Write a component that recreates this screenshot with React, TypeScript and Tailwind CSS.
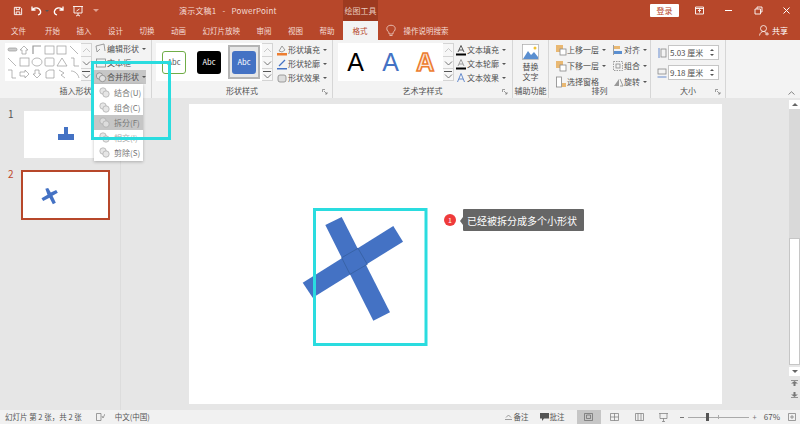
import type { ReactNode } from 'react';

const TABS_LEFT = ['开始', '插入', '设计', '切换', '动画', '幻灯片放映', '审阅', '视图', '帮助'];

function Caret() {
  return <span className="ml-[3px] inline-block h-0 w-0 border-x-[2px] border-t-[2px] border-x-transparent border-t-[#555]" />;
}

function Ico({ children, w = 12 }: { children: ReactNode; w?: number }) {
  return (
    <svg width={w} height="12" viewBox={`0 0 ${w} 12`} fill="none" stroke="#888" strokeWidth="0.8" className="shrink-0">
      {children}
    </svg>
  );
}

function Cmd({ icon, label, caret = true, className = '' }: { icon: ReactNode; label: string; caret?: boolean; className?: string }) {
  return (
    <div className={`flex h-[14px] items-center whitespace-nowrap ${className}`}>
      {icon}
      <span>{label}</span>
      {caret && <Caret />}
    </div>
  );
}

function Chevron({ up = false, light = false }: { up?: boolean; light?: boolean }) {
  return (
    <svg width="9" height="6" viewBox="0 0 9 6" fill="none" stroke={light ? '#bbb' : '#555'} strokeWidth="0.8">
      <path d={up ? 'M1 5 L4.5 1.5 L8 5' : 'M1 1.5 L4.5 5 L8 1.5'} />
    </svg>
  );
}

function Spin() {
  return (
    <div className="flex h-[38px] w-[11px] flex-col border-y border-r border-[#d4d4d4] bg-[#f7f7f7]">
      <div className="flex h-[13px] items-center justify-center border-b border-[#d4d4d4]"><Chevron up light /></div>
      <div className="flex h-[12px] items-center justify-center border-b border-[#d4d4d4]"><Chevron /></div>
      <div className="flex flex-1 flex-col items-center justify-center gap-[1px]">
        <div className="h-px w-[8px] bg-[#555]" />
        <Chevron />
      </div>
    </div>
  );
}

function Launcher() {
  return (
    <svg width="6" height="6" viewBox="0 0 6 6" fill="none" stroke="#777" strokeWidth="0.7">
      <path d="M0.5 3 V0.5 H3 M2 2 L5 5 M5 3 V5 H3" />
    </svg>
  );
}

function Group({ w, label, launcher = false, children }: { w: string; label: string; launcher?: boolean; children: ReactNode }) {
  return (
    <div className={`flex h-full shrink-0 flex-col border-r border-[#d6d6d6] ${w}`}>
      <div className="flex h-[45px] items-start pt-[3px]">{children}</div>
      <div className="relative flex h-[12px] items-center justify-center text-[8px] text-[#505050]">
        <span>{label}</span>
        {launcher && (
          <span className="absolute right-[4px] top-[4px] flex">
            <Launcher />
          </span>
        )}
      </div>
    </div>
  );
}

function ShapeGallery() {
  return (
    <svg width="76" height="38" viewBox="0 0 76 38" className="bg-white" fill="none" stroke="#999" strokeWidth="0.7">
      <rect x="3" y="5" width="9" height="3" rx="1.5" fill="#ccc" />
      <path d="M19 3 L23 7 H21 V11 H17 V7 H15 Z" />
      <path d="M28 11 V3 H36" strokeWidth="1.2" />
      <rect x="40" y="3" width="9" height="8" />
      <rect x="52" y="3" width="9" height="8" />
      <path d="M65 3 L73 11" />
      <path d="M3 15 L11 23" />
      <rect x="15" y="15" width="9" height="8" />
      <ellipse cx="32" cy="19" rx="5" ry="4" />
      <rect x="40" y="15" width="9" height="8" rx="1" />
      <path d="M57 15 L62 23 H52 Z" />
      <path d="M66 15 H69 V23 H74" />
      <path d="M3 27 H7 V35 H11" />
      <path d="M15 29 H20 V27 L24 31 L20 35 V33 H15 Z" />
      <path d="M30 27 H34 V31 H36 L32 35 L28 31 H30 Z" />
      <path d="M41 35 V29 L44 27 H49 V35 Z" />
      <path d="M54 27 L59 30 L56 32 L60 35" />
      <path d="M66 28 C70 28 73 31 74 35" />
    </svg>
  );
}

function StyleBox({ className, label }: { className: string; label: string }) {
  return <div className={`flex h-[23px] w-[24px] items-center justify-center rounded-[3px] text-[7.5px] ${className}`}>{label}</div>;
}

function NumberBox({ value, icon }: { value: string; icon: ReactNode }) {
  return (
    <div className="flex h-[15px] items-center gap-[1px]">
      {icon}
      <div className="flex h-[15px] w-[51px] items-center justify-between border border-[#c6c6c6] bg-white px-[1px] text-[8px]">
        <span>{value}</span>
        <span className="flex flex-col items-center gap-[3px] pr-[3px]">
          <span className="h-0 w-0 border-x-[2px] border-b-[2px] border-x-transparent border-b-[#555]" />
          <span className="h-0 w-0 border-x-[2px] border-t-[2px] border-x-transparent border-t-[#555]" />
        </span>
      </div>
    </div>
  );
}

function MenuRow({ label, active = false, muted = false }: { label: string; active?: boolean; muted?: boolean }) {
  return (
    <div className={`flex h-[15px] items-center pl-[5px] ${active ? 'bg-[#c6c6c6]' : ''} ${muted ? 'text-[#aaa]' : 'text-[#777]'}`}>
      <svg width="11" height="11" viewBox="0 0 11 11" fill={active ? '#ddd' : '#e6e6e6'} stroke="#aaa" strokeWidth="0.7" className="shrink-0">
        <circle cx="4" cy="4" r="3.2" />
        <circle cx="7" cy="7" r="3.2" />
      </svg>
      <span className="ml-[4px]">{label}</span>
    </div>
  );
}

function TitleBar() {
  return (
    <div className="relative flex h-[21px] items-center bg-[#b7472a] text-white">
      <div className="flex w-[99px] items-center pl-[13px]">
        <svg width="10" height="10" viewBox="0 0 11 11" fill="none" stroke="#fff" strokeWidth="1">
          <path d="M1.5 1.5 H8 L9.5 3 V9.5 H1.5 Z M3.5 1.5 V4 H7 V1.5 M3.5 9.5 V6.5 H7.5 V9.5" />
        </svg>
        <svg width="11" height="11" viewBox="0 0 11 11" fill="none" stroke="#fff" strokeWidth="1.3" className="ml-[8px]">
          <path d="M1 1.5 V5 H4.5 M1.3 5 C3 2 8 2 9.5 6 C10 8 8.5 9.5 7 10" />
        </svg>
        <Caret />
        <svg width="11" height="11" viewBox="0 0 11 11" fill="none" stroke="#fff" strokeWidth="1.3" className="ml-[4px]">
          <path d="M10 1.5 V5 H6.5 M9.7 5 C8 2 3 2 1.5 6 C1 8 2.5 9.5 4 10" />
        </svg>
        <svg width="12" height="12" viewBox="0 0 12 12" fill="none" stroke="#fff" strokeWidth="0.9" className="ml-[8px]">
          <path d="M1 1.5 H11 M2 1.5 V8 H10 V1.5 M6 8 V10 M4 11 L6 10 L8 11 M4.5 6 L7.5 4" />
        </svg>
        <span className="ml-[9px] inline-block h-0 w-0 border-x-[3px] border-t-[3px] border-x-transparent border-t-[#e0a090]" />
      </div>
      <div className="ml-[80px] flex w-[96px] gap-[6px] whitespace-nowrap text-[8px] tracking-[0.2px] text-[#f4dcd5]">
        <span>演示文稿1</span>
        <span>-</span>
        <span>PowerPoint</span>
      </div>
      <div className="ml-[68px] flex h-full w-[35px] items-center justify-center bg-[#9d3a20] text-[8px] text-[#e8c9bf]">绘图工具</div>
      <div className="ml-auto flex items-center pr-[9px]">
        <div className="flex h-[13px] w-[29px] items-center justify-center rounded-[1px] bg-white text-[8px] text-[#b7472a]">登录</div>
        <svg width="9" height="9" viewBox="0 0 9 9" fill="none" stroke="#fff" strokeWidth="0.9" className="ml-[16px]"><path d="M0.5 1 H8.5 V8 H0.5 Z M0.5 2.5 H8.5 M4.5 3.5 V6.5 M3 5 L4.5 3.5 L6 5" /></svg>
        <div className="ml-[21px] h-px w-[7px] bg-white" />
        <svg width="9" height="9" viewBox="0 0 9 9" fill="none" stroke="#fff" strokeWidth="0.9" className="ml-[22px]"><path d="M1 3 H6.5 V8 H1 Z M3 3 V1 H8 V6 H6.5" /></svg>
        <svg width="9" height="9" viewBox="0 0 9 9" fill="none" stroke="#fff" strokeWidth="1" className="ml-[19px]"><path d="M1.5 1.5 L7.5 7.5 M7.5 1.5 L1.5 7.5" /></svg>
      </div>
    </div>
  );
}

function TabBar() {
  return (
    <div className="flex h-[19px] items-center bg-[#b7472a] text-[7.5px] text-[#f4dcd5]">
      <span className="ml-[11px]">文件</span>
      <div className="ml-[19px] flex gap-[16.5px]">
        {TABS_LEFT.map(t => <span key={t}>{t}</span>)}
      </div>
      <div className="ml-[8px] flex h-full w-[35px] items-center justify-center bg-[#f3f3f3] text-[#b7472a]">格式</div>
      <svg width="10" height="13" viewBox="0 0 10 13" fill="none" stroke="#f0d4cb" strokeWidth="0.8" className="ml-[8px]">
        <path d="M3 8.5 C1 7 0.5 5 1 3.5 C2 0.5 8 0.5 9 3.5 C9.5 5 9 7 7 8.5 V10 H3 Z M3.5 11.5 H6.5" />
      </svg>
      <span className="ml-[8px]">操作说明搜索</span>
      <div className="ml-auto flex items-center gap-[3px] pr-[12px] text-[8px] text-white">
        <svg width="10" height="11" viewBox="0 0 10 11" fill="none" stroke="#fff" strokeWidth="0.8">
          <circle cx="4.5" cy="3.5" r="3" />
          <path d="M0.5 10.5 C1 7.5 3 6.5 4.5 6.5 C5.5 6.5 6.5 7 7 7.5 M6 9 H10 M8 7 V10.5" />
        </svg>
        <span>共享</span>
      </div>
    </div>
  );
}

function Ribbon() {
  return (
    <div className="relative flex h-[58px] bg-[#f3f3f3] text-[8px] text-[#505050]">
      <Group w="w-[152px]" label="插入形状">
        <div className="ml-[5px]"><ShapeGallery /></div>
        <Spin />
        <div className="ml-[2px] -mt-[1px] flex flex-col">
          <Cmd icon={<Ico><path d="M2 9 L1 3 L9 1 L10 8 M2 9 L5 6" /></Ico>} label="编辑形状" className="pl-[1px]" />
          <Cmd icon={<Ico><rect x="1.5" y="2" width="9" height="8" /></Ico>} label="文本框" caret={false} className="pl-[1px]" />
          <Cmd
            icon={<Ico><circle cx="4.5" cy="5" r="3.2" fill="#e0e0e0" /><circle cx="7.5" cy="7.5" r="3.2" fill="#e0e0e0" /></Ico>}
            label="合并形状"
            className="w-[52px] bg-[#c6c6c6] pl-[1px]"
          />
        </div>
      </Group>

      <Group w="w-[181px]" label="形状样式" launcher>
        <div className="ml-[4px] flex h-[38px] w-[106px] items-center bg-white">
          <StyleBox className="ml-[6px] border border-[#70ad47] bg-white text-[#555]" label="Abc" />
          <StyleBox className="ml-[11px] bg-black text-white" label="Abc" />
          <div className="ml-[7px] flex h-[34px] w-[32px] items-center justify-center border-2 border-[#b5b5b5] bg-[#e8e8e8]">
            <StyleBox className="bg-[#4472c4] text-white" label="Abc" />
          </div>
        </div>
        <Spin />
        <div className="ml-[3px] flex flex-col">
          <Cmd icon={<Ico><path d="M3 7 L6 2 L9 6 L6 8 Z" /><rect x="1" y="9" width="10" height="2.5" fill="#ed7d31" stroke="none" /></Ico>} label="形状填充" />
          <Cmd icon={<Ico><path d="M3 8 L9 2" stroke="#4472c4" strokeWidth="1.3" /><rect x="1" y="10" width="10" height="1.5" fill="#4472c4" stroke="none" /></Ico>} label="形状轮廓" />
          <Cmd icon={<Ico><rect x="2" y="3" width="8" height="7" rx="2" fill="#ddd" /></Ico>} label="形状效果" />
        </div>
      </Group>

      <Group w="w-[180px]" label="艺术字样式" launcher>
        <div className="ml-[5px] flex h-[38px] w-[105px] items-center bg-white font-['Liberation_Sans',sans-serif] text-[25px] leading-none">
          <span className="w-[36px] text-center text-black">A</span>
          <span className="w-[35px] text-center text-[#4472c4]">A</span>
          <span className="w-[36px] text-center font-bold text-[#fbe9dd] [-webkit-text-stroke:1.6px_#ed7d31]">A</span>
        </div>
        <Spin />
        <div className="ml-[1px] flex flex-col">
          <Cmd icon={<Ico><path d="M3 8 L6 1.5 L9 8 M4 6 H8" stroke="#333" /><rect x="1" y="9.5" width="10" height="2" fill="#000" stroke="none" /></Ico>} label="文本填充" />
          <Cmd icon={<Ico><path d="M3 8 L6 1.5 L9 8 M4 6 H8" /><rect x="1" y="9.5" width="10" height="2" fill="#000" stroke="none" /></Ico>} label="文本轮廓" />
          <Cmd icon={<Ico><path d="M2.5 10 L6 1.5 L9.5 10 M4 7 H8" stroke="#4472c4" /></Ico>} label="文本效果" />
        </div>
      </Group>

      <Group w="w-[36px]" label="辅助功能">
        <div className="flex w-full flex-col items-center pt-[1px] leading-[10px]">
          <svg width="18" height="17" viewBox="0 0 18 17" className="mb-[1px]">
            <rect x="0.5" y="0.5" width="16" height="15" fill="#fff" stroke="#aaa" strokeWidth="0.7" />
            <path d="M1 15 L6 7 L9 11 L12 8 L16 13 V15 Z" fill="#5b8fd0" />
            <circle cx="13" cy="4" r="1.5" fill="#f2c230" />
          </svg>
          <span>替换</span>
          <span>文字</span>
        </div>
      </Group>

      <Group w="w-[102px]" label="排列">
        <div className="ml-[6px] flex flex-col gap-px">
          <Cmd icon={<Ico><rect x="1" y="1" width="7" height="7" fill="#e9b872" stroke="none" /><rect x="5" y="5" width="6" height="6" fill="#fff" /></Ico>} label="上移一层" className="mb-[1px]" />
          <Cmd icon={<Ico><rect x="1" y="1" width="7" height="7" fill="#e9b872" stroke="none" /><rect x="5" y="5" width="6" height="6" fill="#fff" /></Ico>} label="下移一层" className="mb-[1px]" />
          <Cmd icon={<Ico><rect x="1.5" y="1" width="5" height="10" fill="#fff" /><rect x="7" y="7" width="4" height="4" fill="#e9b872" stroke="none" /></Ico>} label="选择窗格" caret={false} />
        </div>
        <div className="ml-[6px] flex flex-col gap-px">
          <Cmd icon={<Ico><path d="M1.5 1 V11" /><rect x="2" y="2" width="6" height="3" fill="#e9b872" stroke="none" /><rect x="2" y="7" width="8" height="3" fill="#5b8fd0" stroke="none" /></Ico>} label="对齐" className="mb-[1px]" />
          <Cmd icon={<Ico><rect x="1.5" y="1.5" width="9" height="9" strokeDasharray="1.5 1" /><rect x="4" y="4" width="4" height="4" /></Ico>} label="组合" className="mb-[1px]" />
          <Cmd icon={<Ico><path d="M2 10 L7 3 V10 Z" fill="#999" stroke="none" /><path d="M8 3 L11 10 H8" /></Ico>} label="旋转" />
        </div>
      </Group>

      <Group w="w-[75px]" label="大小" launcher>
        <div className="ml-[6px] mt-[2px] flex flex-col gap-[5px]">
          <NumberBox value="5.03 厘米" icon={<Ico w={10}><path d="M2 1 V11" stroke="#4472c4" /><rect x="4" y="2" width="5" height="8" /></Ico>} />
          <NumberBox value="9.18 厘米" icon={<Ico w={10}><path d="M0.5 10 H9.5" stroke="#4472c4" /><rect x="1" y="2" width="8" height="5" /></Ico>} />
        </div>
      </Group>

      <svg width="7" height="4" viewBox="0 0 7 4" fill="none" stroke="#666" strokeWidth="0.8" className="absolute bottom-[3px] right-[5px]">
        <path d="M0.5 3.5 L3.5 0.8 L6.5 3.5" />
      </svg>
    </div>
  );
}

function Thumbs() {
  return (
    <div className="w-[121px] shrink-0 border-r border-[#dcdcdc] text-[10px]">
      <div className="flex pt-[13px]">
        <span className="-mt-[4px] w-[24px] pl-[8px] leading-[14px] text-[#555]">1</span>
        <div className="flex h-[47px] w-[84px] items-start justify-center bg-white pt-[16px]">
          <svg width="16" height="14" viewBox="0 0 16 14" fill="#4472c4">
            <path d="M6 0 H10 V7 H16 V13 H0 V7 H6 Z" />
          </svg>
        </div>
      </div>
      <div className="mt-[12px] flex">
        <span className="-mt-[3px] w-[21px] pl-[8px] leading-[14px] text-[#c0492c]">2</span>
        <div className="h-[50px] w-[89px] border-2 border-[#b7472a] bg-white pl-[18px] pt-[16px]">
          <svg width="17" height="17" viewBox="0 0 100 102" fill="#4472c4">
            <path d="M25 5 L42 0 L58 27 L90 12 L100 28 L68 46 L88 88 L70 98 L50 58 L12 78 L2 62 L38 40 Z" />
          </svg>
        </div>
      </div>
    </div>
  );
}

function Slide() {
  return (
    <div className="relative h-[300px] w-[533px] bg-white">
      <svg width="533" height="300" viewBox="189 104 533 300" className="absolute inset-0">
        <path d="M302.7 282.7 L393.3 226 L403 241.7 L312.7 297.7 Z" fill="#4472c4" />
        <path d="M325.3 225 L341.7 217 L390 312.3 L373.3 320.7 Z" fill="#4472c4" />
        <path d="M341.7 257.7 L358 248.3 L367.3 264.3 L350 274.3 Z" fill="#4472c4" stroke="#365f9f" strokeWidth="0.8" />
        <rect x="314.5" y="209.5" width="111.5" height="135" fill="none" stroke="#2adcdf" strokeWidth="3" />
      </svg>
      <div className="absolute left-[255px] top-[110px] flex h-[12px] w-[12px] items-center justify-center rounded-full bg-[#ef3b3b] text-[7px] text-white">1</div>
      <div className="absolute left-[271px] top-[113px] h-0 w-0 border-y-[4px] border-r-[3px] border-y-transparent border-r-[#666]" />
      <div className="absolute left-[274px] top-[105px] flex h-[22px] w-[121px] items-center rounded-[1px] bg-[#666] pl-[4px] text-[10px] text-white">已经被拆分成多个小形状</div>
    </div>
  );
}

function ScrollBar() {
  return (
    <div className="flex w-[11px] shrink-0 flex-col items-center pt-[2px]">
      <div className="flex h-[9px] w-full items-center justify-center bg-white">
        <span className="h-0 w-0 border-x-[3px] border-b-[3px] border-x-transparent border-b-[#666]" />
      </div>
      <div className="h-[129px] w-full bg-[#d9d9d9]" />
      <div className="h-[127px] w-full border border-[#c6c6c6] bg-white" />
      <div className="mt-[2px] flex h-[9px] w-full items-center justify-center bg-white">
        <span className="h-0 w-0 border-x-[3px] border-t-[3px] border-x-transparent border-t-[#666]" />
      </div>
      <div className="mt-[3px] flex flex-col items-center gap-[6px]">
        <svg width="7" height="7" viewBox="0 0 7 7" fill="#777"><path d="M0 1 H7 V1.8 H0 Z M3.5 2 L7 4.5 H0 Z M2.5 4.5 H4.5 V7 H2.5 Z" /></svg>
        <svg width="7" height="7" viewBox="0 0 7 7" fill="#777"><path d="M0 6 H7 V5.2 H0 Z M3.5 5 L7 2.5 H0 Z M2.5 2.5 H4.5 V0 H2.5 Z" /></svg>
      </div>
    </div>
  );
}

function StatusBar() {
  return (
    <div className="flex h-[14px] items-center bg-[#f1f1f1] text-[7.5px] text-[#555]">
      <span className="ml-[5px]">幻灯片 第 2 张，共 2 张</span>
      <svg width="9" height="8" viewBox="0 0 9 8" fill="none" stroke="#777" strokeWidth="0.7" className="ml-[14px]">
        <path d="M0.5 0.5 H5 V7.5 H0.5 Z M6 3 L7 5 L9 1" />
      </svg>
      <span className="ml-[10px]">中文(中国)</span>
      <svg width="7" height="6" viewBox="0 0 7 6" fill="none" stroke="#777" strokeWidth="0.7" className="ml-auto">
        <path d="M1 3.5 L3.5 1 L6 3.5 M0 5.5 H7" />
      </svg>
      <span className="ml-[2px]">备注</span>
      <svg width="9" height="8" viewBox="0 0 9 8" fill="#555" className="ml-[11px]">
        <path d="M0 0 H9 V5.5 H4 L2 8 V5.5 H0 Z" />
      </svg>
      <span className="ml-[1px]">批注</span>
      <div className="ml-[12px] flex h-full w-[24px] items-center justify-center bg-[#c6c6c6]">
        <svg width="9" height="8" viewBox="0 0 9 8" fill="none" stroke="#666" strokeWidth="0.7"><path d="M0.5 0.5 H8.5 V7.5 H0.5 Z M2.5 2 H6.5 V5.5 H2.5 Z" /></svg>
      </div>
      <svg width="9" height="8" viewBox="0 0 9 8" fill="none" stroke="#777" strokeWidth="0.7" className="ml-[9px]"><path d="M0.5 0.5 H8.5 V7.5 H0.5 Z M4.5 0.5 V7.5 M0.5 4 H8.5" /></svg>
      <svg width="9" height="8" viewBox="0 0 9 8" fill="none" stroke="#777" strokeWidth="0.7" className="ml-[16px]"><path d="M0.5 0.5 H8.5 V7.5 H0.5 Z M3 0.5 V7.5 M6 0.5 V7.5" /></svg>
      <svg width="9" height="9" viewBox="0 0 9 9" fill="none" stroke="#777" strokeWidth="0.7" className="ml-[15px]"><path d="M0 0.5 H9 M1 0.5 V5.5 H8 V0.5 M4.5 5.5 V8.5 M3 8.5 H6" /></svg>
      <div className="ml-[12px] h-px w-[4px] bg-[#777]" />
      <div className="relative ml-[4px] flex h-full w-[61px] items-center">
        <div className="h-px w-full bg-[#aaa]" />
        <div className="absolute left-[18px] top-[3px] h-[8px] w-[3px] bg-[#555]" />
        <div className="absolute left-[30px] top-[5px] h-[4px] w-px bg-[#aaa]" />
      </div>
      <span className="ml-[4px] text-[#777]">+</span>
      <span className="ml-[7px] text-[8px]">67%</span>
      <svg width="8" height="8" viewBox="0 0 8 8" fill="none" stroke="#777" strokeWidth="0.7" className="ml-[8px] mr-[4px]"><path d="M0.5 0.5 H7.5 V7.5 H0.5 Z M2 4 H6 M4 2 V6" /></svg>
    </div>
  );
}

export default function App() {
  return (
    <div className="relative flex h-[424px] w-[800px] flex-col overflow-hidden bg-[#e6e6e6] font-['Noto_Sans_CJK_SC','Noto_Sans',sans-serif]">
      <TitleBar />
      <TabBar />
      <Ribbon />
      <div className="flex h-[312px] bg-[#e6e6e6]">
        <Thumbs />
        <div className="flex-1 pl-[68px] pt-[6px]">
          <Slide />
        </div>
        <ScrollBar />
      </div>
      <StatusBar />

      {/* merge shapes menu */}
      <div className="absolute left-[94px] top-[84px] w-[49px] bg-white pt-[1px] pb-[1px] text-[8px] shadow-[0_1px_3px_rgba(0,0,0,0.25)]">
        <MenuRow label="结合(U)" />
        <MenuRow label="组合(C)" />
        <MenuRow label="拆分(F)" active />
        <MenuRow label="相交(I)" muted />
        <MenuRow label="剪除(S)" />
      </div>
      {/* teal annotation box */}
      <div className="pointer-events-none absolute left-[91px] top-[61px] h-[79px] w-[80px] border-[3px] border-[#2adcdf]" />
    </div>
  );
}
